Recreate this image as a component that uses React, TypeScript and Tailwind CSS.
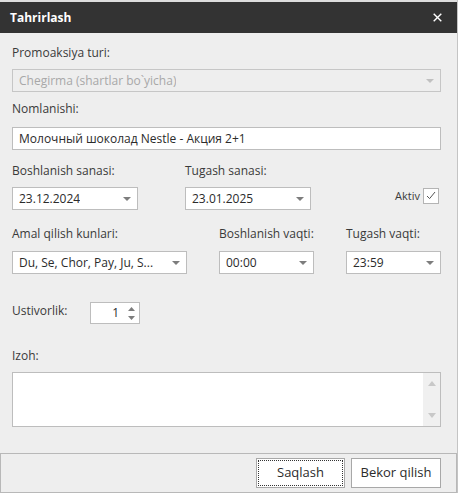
import React from "react";

const font = { fontFamily: '"Open Sans", "Noto Sans", sans-serif' };

function Arrow({ color = "#7a7a7a" }: { color?: string }) {
  return (
    <svg width="8" height="4" viewBox="0 0 8 4" className="shrink-0">
      <path d="M0 0 L8 0 L4 4 Z" fill={color} />
    </svg>
  );
}

function Select({
  value,
  className,
  disabled,
}: {
  value: string;
  className: string;
  disabled?: boolean;
}) {
  return (
    <div
      className={
        "flex items-center justify-between border pl-[6px] pr-[6px] text-[12px] " +
        (disabled
          ? "border-[#c6c6c6] bg-[#eeeeee] text-[#a8a8a8] "
          : "border-[#bdbdbd] bg-white text-[#2b2b2b] ") +
        className
      }
    >
      <span className="truncate">{value}</span>
      <Arrow color={disabled ? "#c0c0c0" : "#7d7d7d"} />
    </div>
  );
}

function Label({ children, className = "" }: { children: React.ReactNode; className?: string }) {
  return <div className={"h-[18px] text-[12px] leading-[18px] text-[#3a3a3a] " + className}>{children}</div>;
}

export default function App() {
  return (
    <div className="w-[460px] h-[493px] bg-white" style={font}>
      <div className="flex h-[493px] w-[458px] flex-col border-r border-[#c4c4c4] bg-[#eeeeee]">
        <div className="h-[2px] bg-[#dedede]" />
        <div className="flex h-[31px] items-center justify-between bg-[#333333] pl-[10px] pr-[15px]">
          <span className="text-[12px] font-bold text-white">Tahrirlash</span>
          <svg width="9" height="9" viewBox="0 0 9 9">
            <path d="M0.7 0.7 L8.3 8.3 M8.3 0.7 L0.7 8.3" stroke="white" strokeWidth="1.4" />
          </svg>
        </div>

        <div className="flex flex-col pl-[12px] pr-[16px] pt-[11px]">
          <Label>Promoaksiya turi:</Label>
          <Select disabled value="Chegirma (shartlar bo`yicha)" className="mt-[7px] h-[23px] w-[429px]" />

          <Label className="mt-[8px]">Nomlanishi:</Label>
          <div className="mt-[9px] flex h-[23px] w-[429px] items-center border border-[#bdbdbd] bg-white pl-[6px] text-[12px] text-[#2b2b2b]">
            Молочный шоколад Nestle - Акция 2+1
          </div>

          <div className="mt-[12px] flex items-end">
            <div className="flex w-[173px] flex-col">
              <Label>Boshlanish sanasi:</Label>
              <Select value="23.12.2024" className="mt-[7px] h-[23px] w-[126px]" />
            </div>
            <div className="flex w-[210px] flex-col">
              <Label>Tugash sanasi:</Label>
              <Select value="23.01.2025" className="mt-[7px] h-[23px] w-[126px]" />
            </div>
            <div className="mb-[6px] flex items-center gap-[3px]">
              <span className="text-[11px] text-[#3a3a3a]">Aktiv</span>
              <div className="flex h-[16px] w-[16px] items-center justify-center border border-[#b4b4b4] bg-white">
                <svg width="10" height="9" viewBox="0 0 10 9">
                  <path d="M1 5 L3.6 7.6 L9 1" fill="none" stroke="#555" strokeWidth="1" />
                </svg>
              </div>
            </div>
          </div>

          <div className="mt-[15px] flex">
            <div className="flex w-[207px] flex-col">
              <Label>Amal qilish kunlari:</Label>
              <Select value="Du, Se, Chor, Pay, Ju, S..." className="mt-[8px] h-[23px] w-[175px]" />
            </div>
            <div className="flex w-[127px] flex-col">
              <Label>Boshlanish vaqti:</Label>
              <Select value="00:00" className="mt-[8px] h-[23px] w-[95px]" />
            </div>
            <div className="flex flex-col">
              <Label>Tugash vaqti:</Label>
              <Select value="23:59" className="mt-[8px] h-[23px] w-[95px]" />
            </div>
          </div>

          <div className="mt-[28px] flex items-start">
            <Label className="w-[78px]">Ustivorlik:</Label>
            <div className="flex h-[22px] w-[50px] items-center justify-end border border-[#bdbdbd] bg-white pr-[4px]">
              <span className="mr-[9px] text-[12px] text-[#2b2b2b]">1</span>
              <div className="flex flex-col gap-[5px]">
                <svg width="7" height="4" viewBox="0 0 7 4">
                  <path d="M0 4 L7 4 L3.5 0 Z" fill="#7d7d7d" />
                </svg>
                <svg width="7" height="4" viewBox="0 0 7 4">
                  <path d="M0 0 L7 0 L3.5 4 Z" fill="#7d7d7d" />
                </svg>
              </div>
            </div>
          </div>

          <Label className="mt-[23px]">Izoh:</Label>
          <div className="mt-[7px] flex h-[55px] w-[429px] border border-[#bdbdbd] bg-white">
            <div className="flex-1" />
            <div className="flex w-[17px] flex-col items-center justify-between bg-[#f0f0f0] py-[8px]">
              <svg width="8" height="5" viewBox="0 0 8 5">
                <path d="M0 5 L8 5 L4 0 Z" fill="#c8c8c8" />
              </svg>
              <svg width="8" height="5" viewBox="0 0 8 5">
                <path d="M0 0 L8 0 L4 5 Z" fill="#c8c8c8" />
              </svg>
            </div>
          </div>
        </div>

        <div className="mt-[26px] flex h-[40px] w-[457px] items-start justify-end gap-[6px] border border-[#b8b8b8] bg-[#eeeeee] pr-[15px] pt-[4px]">
          <button className="flex h-[30px] w-[89px] items-center justify-center border border-[#a8a8a8] bg-white p-[1px] text-[13px] text-[#2b2b2b]">
            <span className="flex h-full w-full items-center justify-center border border-dotted border-[#333]">
              Saqlash
            </span>
          </button>
          <button className="flex h-[30px] w-[90px] items-center justify-center border border-[#a8a8a8] bg-white text-[13px] text-[#2b2b2b]">
            Bekor qilish
          </button>
        </div>
      </div>
    </div>
  );
}
